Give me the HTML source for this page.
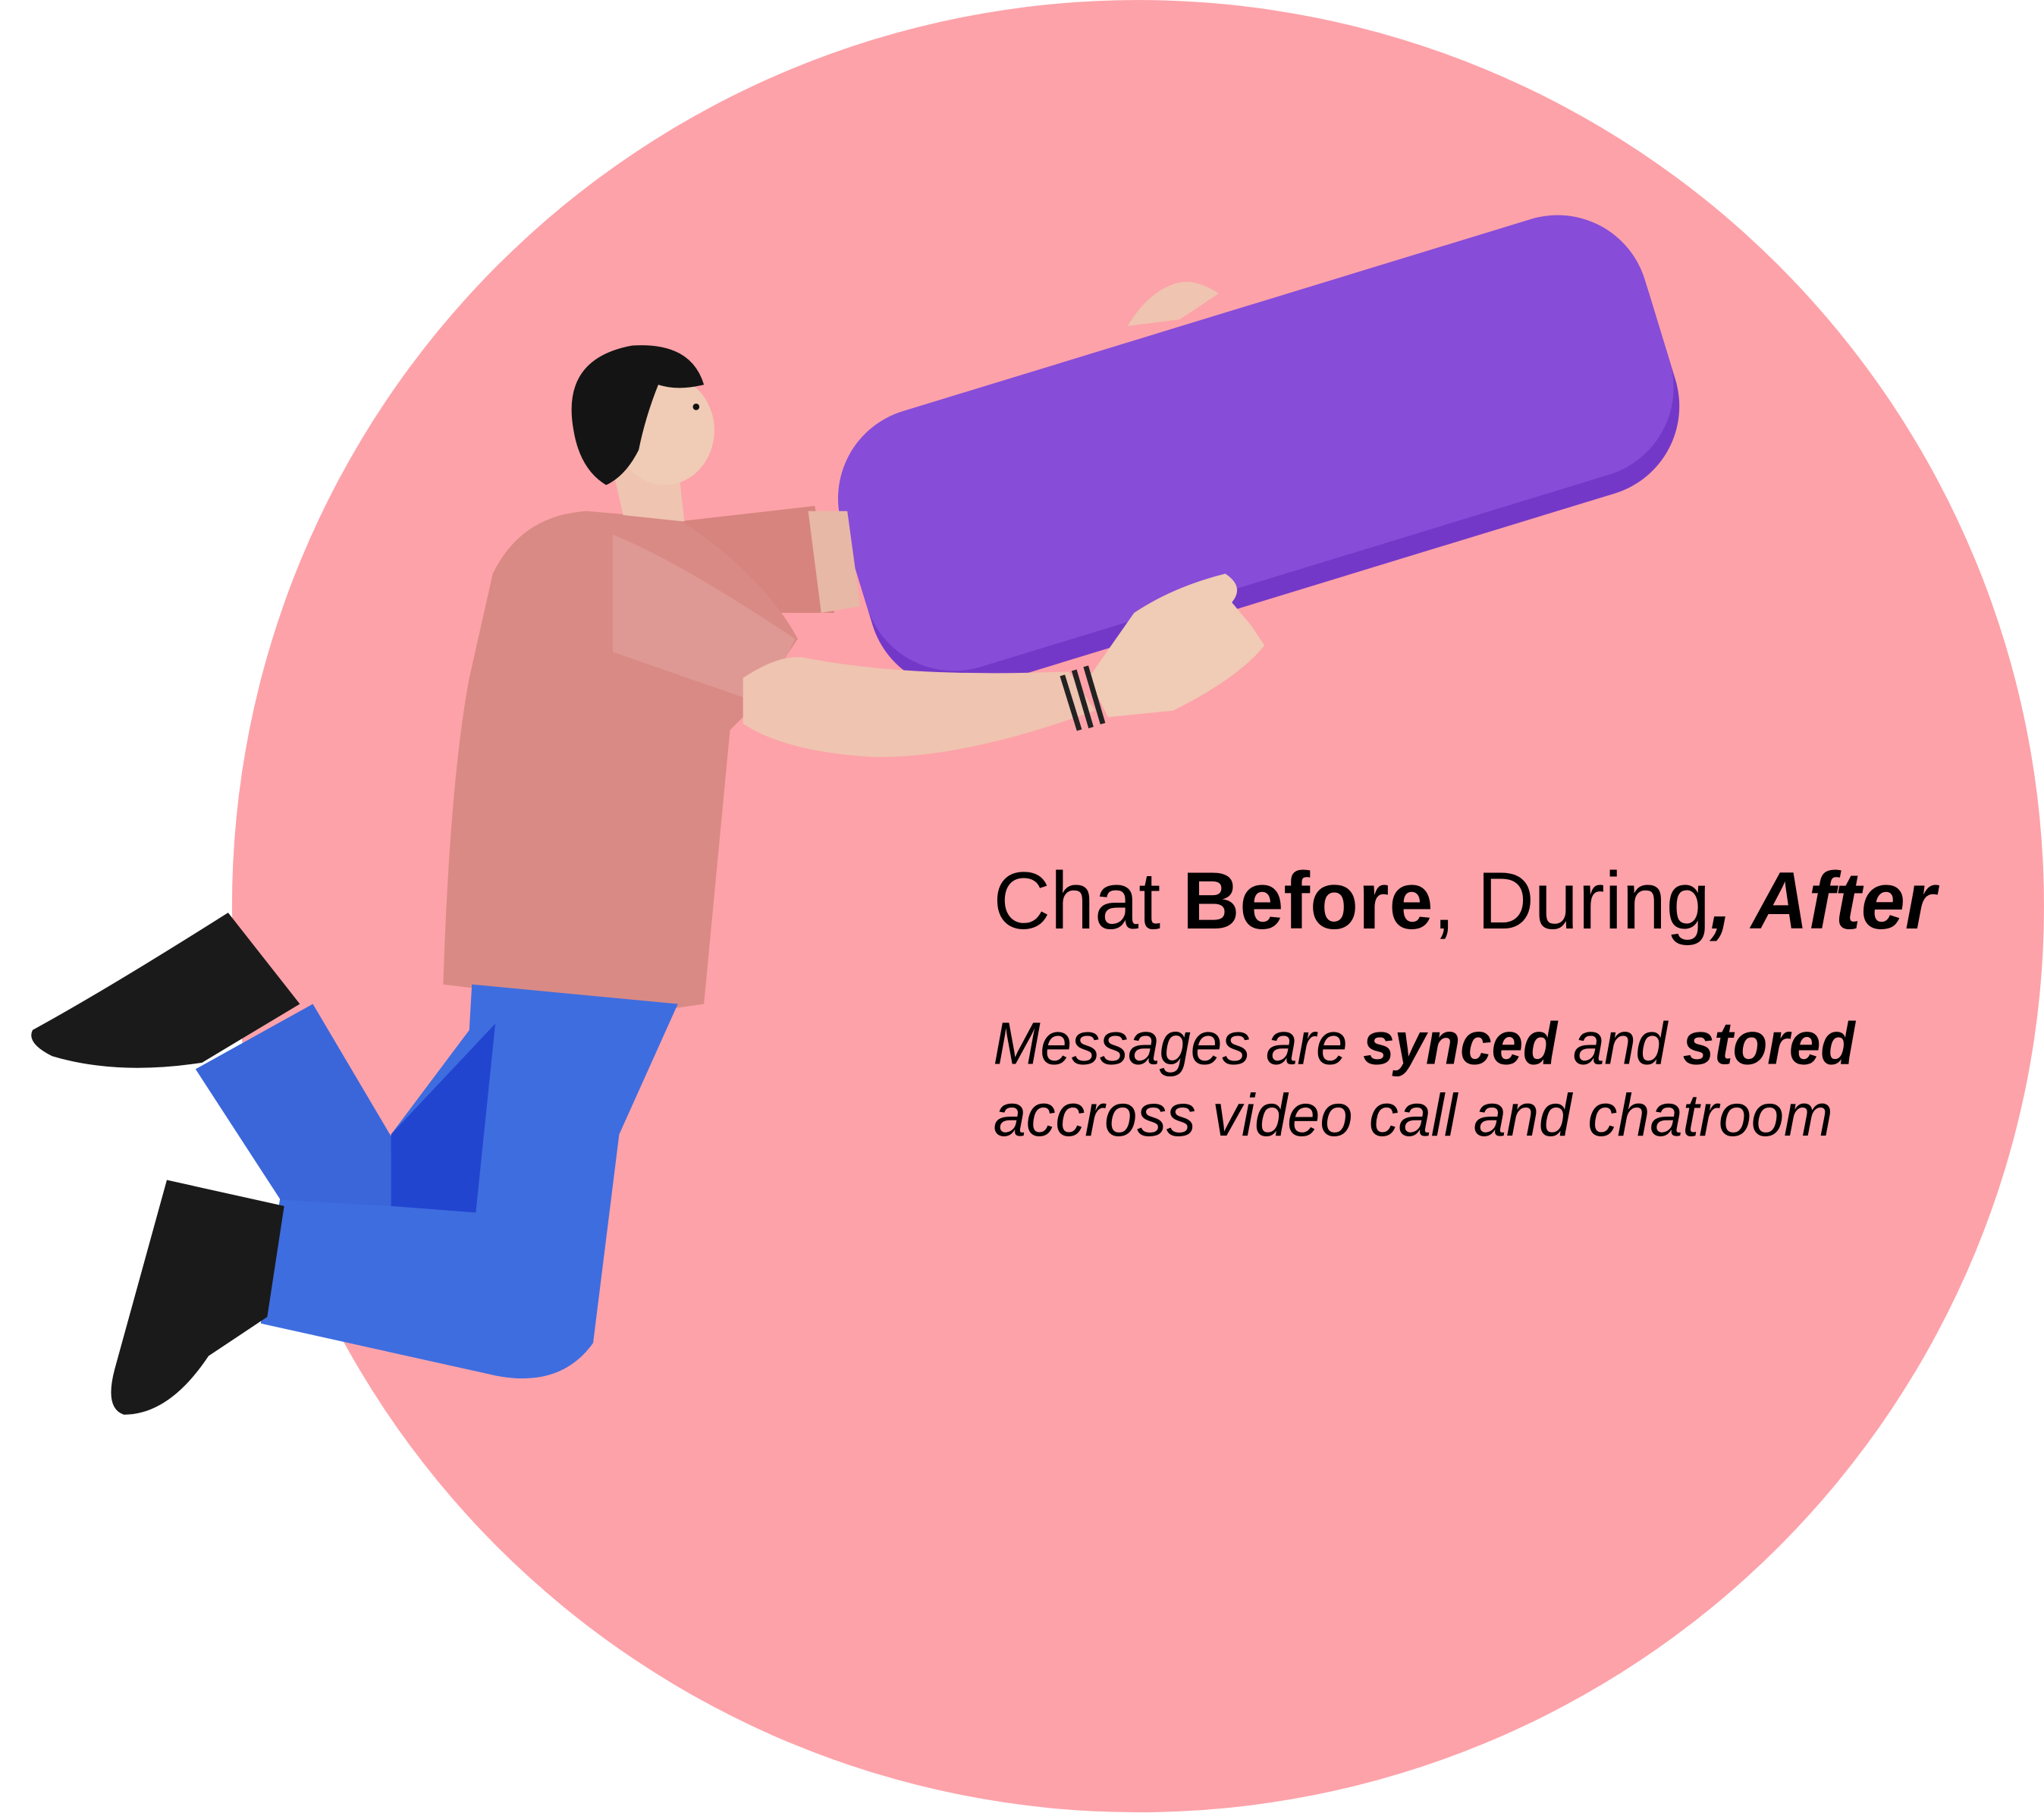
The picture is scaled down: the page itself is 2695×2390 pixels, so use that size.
<!DOCTYPE html>
<html><head><meta charset="utf-8">
<style>
html,body{margin:0;padding:0;background:#fff;width:2695px;height:2390px;overflow:hidden}
svg{display:block}
text{font-family:"Liberation Sans",Arial,sans-serif;fill:#000}
</style></head>
<body>
<svg width="2695" height="2390" viewBox="0 0 1568 1390.5" xmlns="http://www.w3.org/2000/svg">
<circle cx="873" cy="695" r="695" fill="#fda2a9"/>

<!-- chat bubble -->
<g transform="translate(965 345) rotate(-17)">
<rect x="-322" y="-98" width="644" height="210" rx="70" fill="#7438c8"/>
<rect x="-322" y="-108" width="644" height="205" rx="70" fill="#874cd8"/>
</g>
<!-- back hand on top -->
<path d="M865 250 Q880 225 900 218 Q915 212 935 225 L905 245 Z" fill="#efc4b0"/>

<!-- back arm -->
<path d="M520 400 L625 388 L640 470 L560 470 Z" fill="#d7847f"/>
<path d="M620 392 L650 392 L660 465 L630 470 Z" fill="#e7b8a6"/>

<!-- shirt -->
<path d="M378 440 Q400 395 450 392 L520 398 Q585 440 612 490 L575 545 L560 560 L540 770 L505 775 L340 755 Q345 600 360 520 Z" fill="#d98a85"/>
<path d="M470 410 Q520 430 610 490 L585 540 L470 500 Z" fill="#df9994"/>

<!-- front arm -->
<path d="M570 520 Q600 500 620 505 Q700 520 820 515 L840 545 Q730 585 660 580 Q600 575 570 555 Z" fill="#efc4b0"/>
<path d="M835 520 L870 470 Q900 450 940 440 Q955 450 945 462 L960 480 L970 495 Q950 520 900 545 L850 550 Z" fill="#f0cbb5"/>
<g stroke="#222" stroke-width="4">
<line x1="815" y1="518" x2="828" y2="560"/>
<line x1="824" y1="514" x2="837" y2="558"/>
<line x1="833" y1="511" x2="846" y2="555"/>
</g>

<!-- neck & head -->
<path d="M470 360 L520 355 L525 400 L478 395 Z" fill="#efc4b0"/>
<ellipse cx="510" cy="330" rx="38" ry="42" fill="#f0cbb5"/>
<path d="M440 330 Q430 275 485 265 Q530 262 540 295 Q520 300 505 295 Q495 320 490 345 Q480 365 465 372 Q445 360 440 330 Z" fill="#141414"/>
<circle cx="534" cy="312" r="2.5" fill="#111"/>

<!-- pants -->
<path d="M362 755 L520 770 L475 870 L455 1030 Q430 1065 380 1055 L200 1015 L215 918 L295 922 L300 870 L360 790 Z" fill="#3e6de0"/>
<path d="M150 820 L240 770 L305 880 L300 925 L215 920 Z" fill="#3a66da"/>
<path d="M300 870 L380 785 L365 930 L300 925 Z" fill="#2245d0"/>

<!-- shoes -->
<path d="M25 790 Q80 760 175 700 L230 770 L180 800 L155 815 Q90 825 40 810 Q20 800 25 790 Z" fill="#1a1a1a"/>
<path d="M128 905 L218 925 L205 1010 L160 1040 Q130 1085 95 1085 Q80 1080 88 1050 Z" fill="#1a1a1a"/>

<!-- text -->
<text x="762" y="712" font-size="62" textLength="723" lengthAdjust="spacingAndGlyphs">Chat <tspan font-weight="bold">Before</tspan>, During<tspan font-weight="bold" font-style="italic">, After</tspan></text>
<text x="762" y="816" font-size="46" font-style="italic" textLength="661" lengthAdjust="spacingAndGlyphs">Messages are <tspan font-weight="bold">synced</tspan> and <tspan font-weight="bold">stored</tspan></text>
<text x="762" y="871" font-size="46" font-style="italic" textLength="644" lengthAdjust="spacingAndGlyphs">accross video call and chatroom</text>
</svg>
</body></html>
